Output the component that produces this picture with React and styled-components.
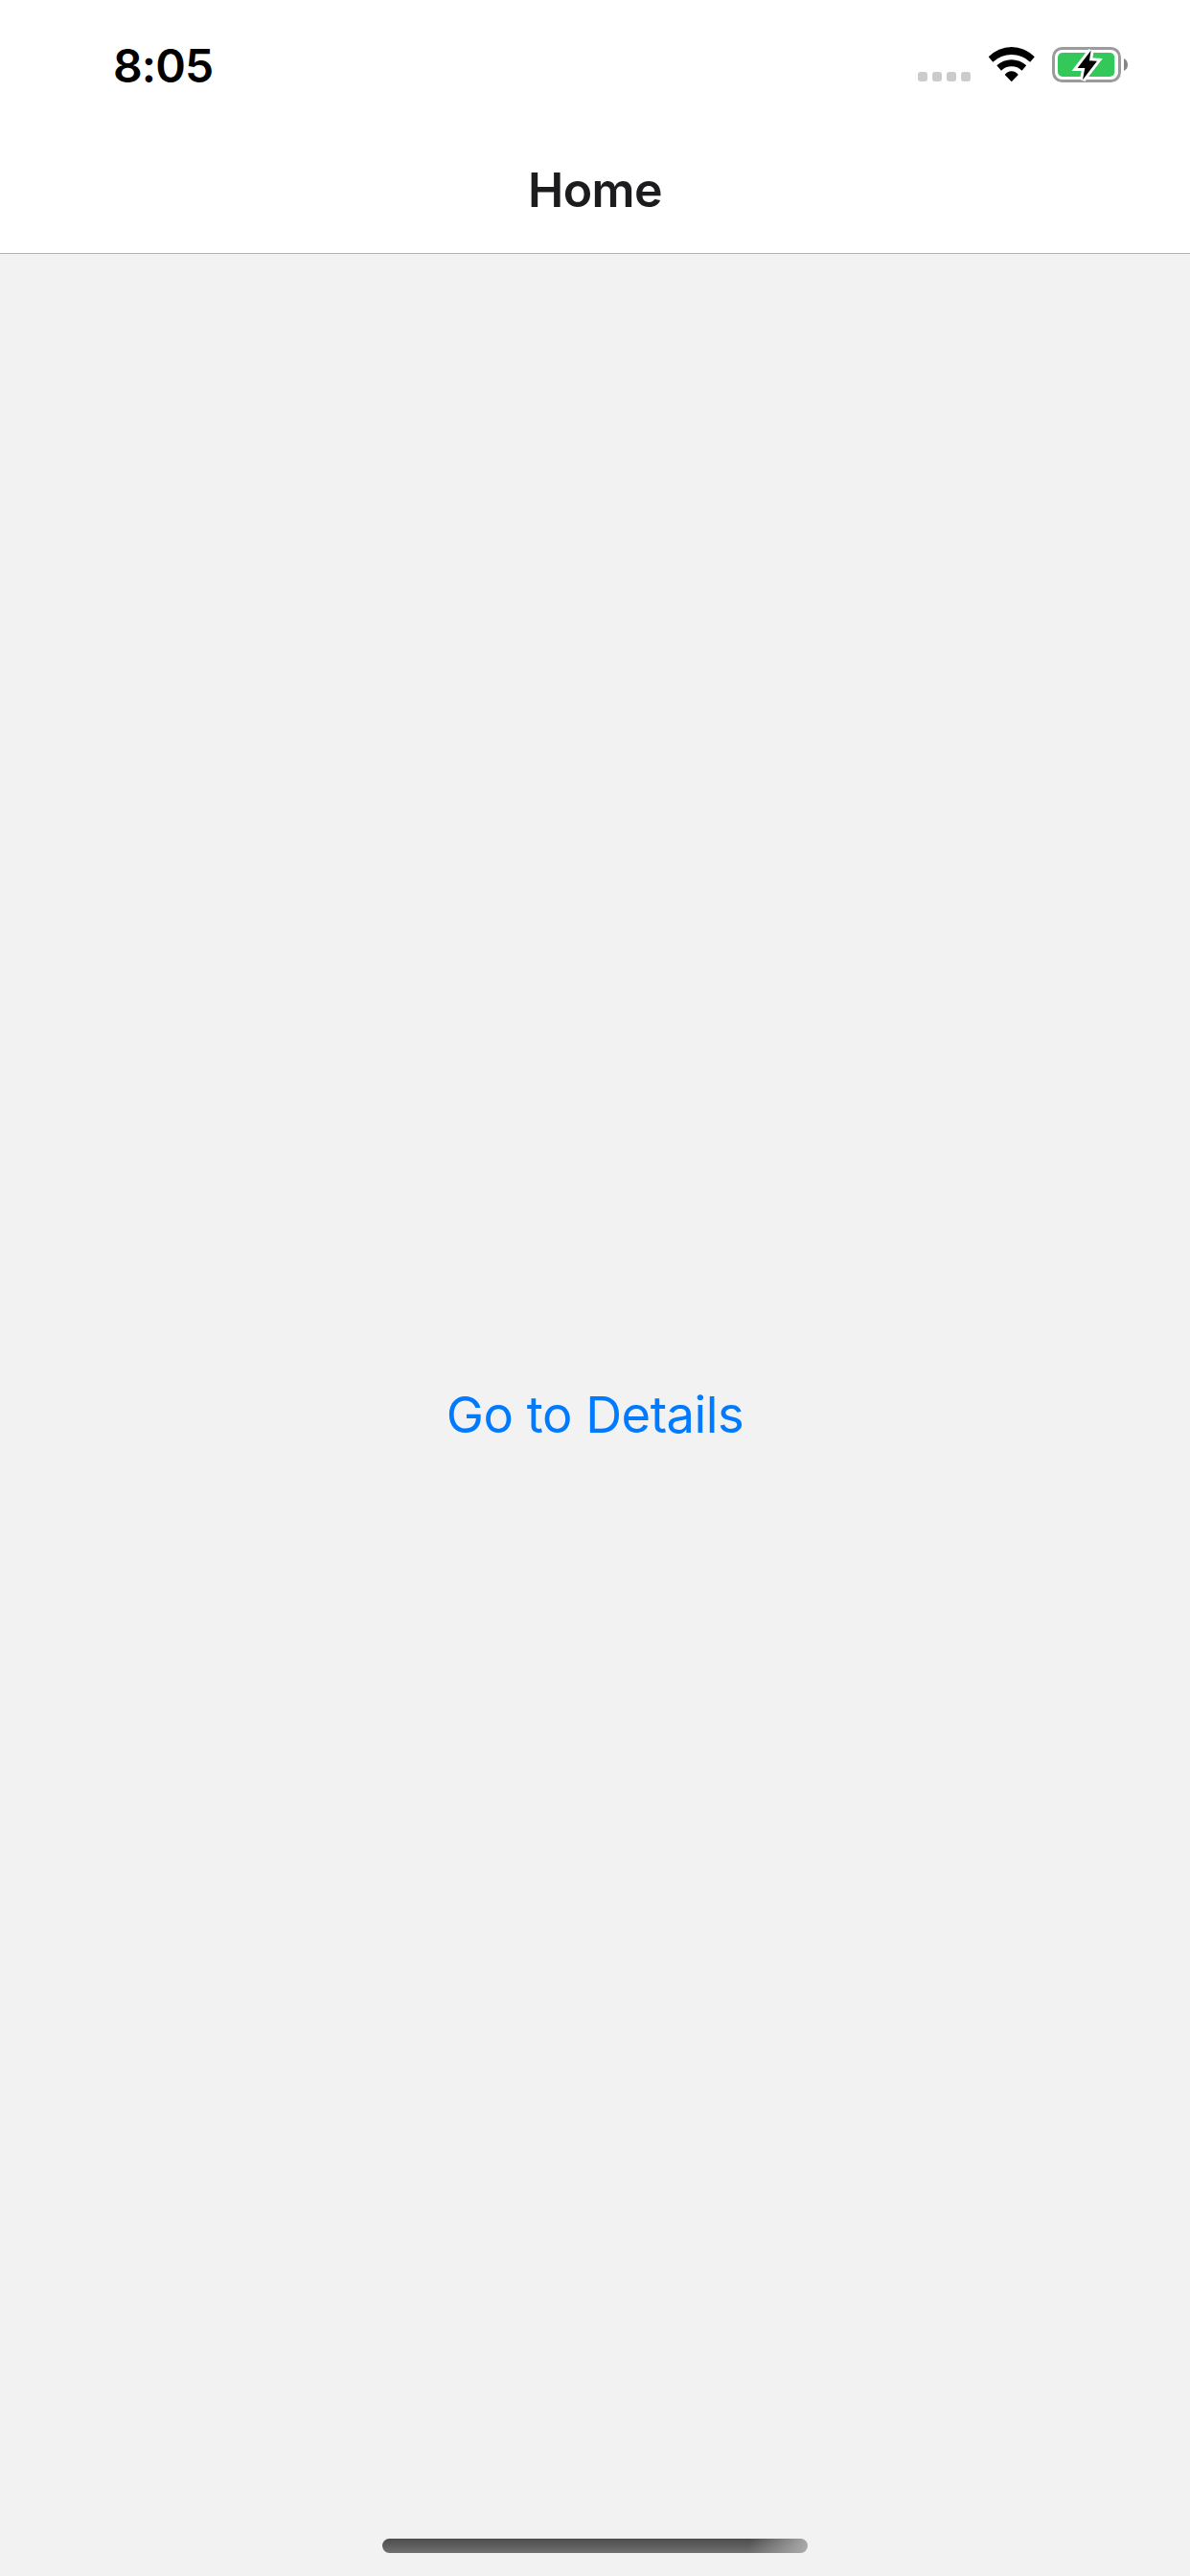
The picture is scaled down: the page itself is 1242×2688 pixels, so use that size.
import React from "react";
import styled, { createGlobalStyle } from "styled-components";

const GlobalStyle = createGlobalStyle`
  * { box-sizing: border-box; }
  body { margin: 0; background: #f2f2f2; }
`;

const Screen = styled.div`
  width: 1242px;
  height: 2688px;
  display: flex;
  flex-direction: column;
  overflow: hidden;
  background: #f2f2f2;
  font-family: Inter, "Liberation Sans", sans-serif;
`;

const Header = styled.header`
  height: 265px;
  flex: none;
  display: flex;
  flex-direction: column;
  background: #fff;
  border-bottom: 1px solid #b2b2b2;
`;

const StatusBar = styled.div`
  height: 132px;
  padding: 48px 64px 0 118px;
  display: flex;
  justify-content: space-between;
  align-items: flex-start;
`;

const Time = styled.span`
  font-size: 48px;
  line-height: 41px;
  font-weight: 570;
  letter-spacing: -0.9px;
  color: #000;
`;

const StatusIcons = styled.div`
  display: flex;
  align-items: flex-start;
`;

const CellularDots = styled.div`
  display: flex;
  gap: 5px;
  padding-top: 27px;
  margin-right: 17px;
`;

const Dot = styled.span`
  width: 10px;
  height: 10px;
  border-radius: 3px;
  background: #cbcbcb;
`;

const WifiIcon = styled.svg`
  width: 52px;
  height: 38px;
  margin-right: 15px;
`;

const BatteryIcon = styled.svg`
  width: 81px;
  height: 40px;
`;

const TitleBar = styled.div`
  height: 132px;
  display: flex;
  align-items: center;
  justify-content: center;
`;

const Title = styled.h1`
  margin: 0;
  font-size: 50px;
  line-height: 60px;
  font-weight: 580;
  letter-spacing: -0.6px;
  color: #1c1c1e;
`;

const Content = styled.main`
  flex: 1;
  display: flex;
  align-items: center;
  justify-content: center;
`;

const LinkButton = styled.button`
  border: 0;
  padding: 24px 24px 26px;
  background: transparent;
  font-family: inherit;
  font-size: 52.5px;
  line-height: 64px;
  font-weight: 400;
  letter-spacing: -0.5px;
  color: #007aff;
`;

const HomeArea = styled.footer`
  height: 39px;
  margin-top: -39px;
  flex: none;
  display: flex;
  justify-content: center;
  align-items: flex-start;
`;

const HomeIndicator = styled.div`
  width: 444px;
  height: 15px;
  border-radius: 8px;
  background:
    linear-gradient(100deg, rgba(175, 175, 175, 0) 86%, rgba(175, 175, 175, 0.95) 100%),
    linear-gradient(#4c4c4c, #707070);
`;

const BOLT = "M41.6 4.8 L40 15.3 L48 15.7 L33 35.2 L35.3 23 L27.6 23 Z";

function Wifi() {
  return (
    <WifiIcon viewBox="0 0 52 38">
      <path d="M1.7 11.3 A33.1 33.1 0 0 1 49.8 11.3 L45.2 16.7 A28.5 28.5 0 0 0 6.3 16.7 Z" />
      <path d="M10.3 20.2 A23 23 0 0 1 41.2 20.2 L36.5 25.7 A15.2 15.2 0 0 0 15 25.7 Z" />
      <path d="M18.7 30 A8.6 8.6 0 0 1 32.8 30 L25.75 37.2 Z" />
    </WifiIcon>
  );
}

function Battery() {
  return (
    <BatteryIcon viewBox="0 0 81 40">
      <rect x="2.5" y="2.5" width="69" height="34" rx="9" fill="none" stroke="#9b9b9b" strokeWidth="3" />
      <rect x="7" y="7" width="59.3" height="25" rx="5" fill="#34c759" />
      <path d="M76 13 Q80 15 80 19.5 Q80 24 76 26 Z" fill="#858585" />
      <path d={BOLT} fill="#fff" stroke="#fff" strokeWidth="6" />
      <path d={BOLT} fill="#000" />
    </BatteryIcon>
  );
}

export default function App() {
  return (
    <Screen>
      <GlobalStyle />
      <Header>
        <StatusBar>
          <Time>8:05</Time>
          <StatusIcons>
            <CellularDots>
              <Dot />
              <Dot />
              <Dot />
              <Dot />
            </CellularDots>
            <Wifi />
            <Battery />
          </StatusIcons>
        </StatusBar>
        <TitleBar>
          <Title>Home</Title>
        </TitleBar>
      </Header>
      <Content>
        <LinkButton type="button">Go to Details</LinkButton>
      </Content>
      <HomeArea>
        <HomeIndicator />
      </HomeArea>
    </Screen>
  );
}
